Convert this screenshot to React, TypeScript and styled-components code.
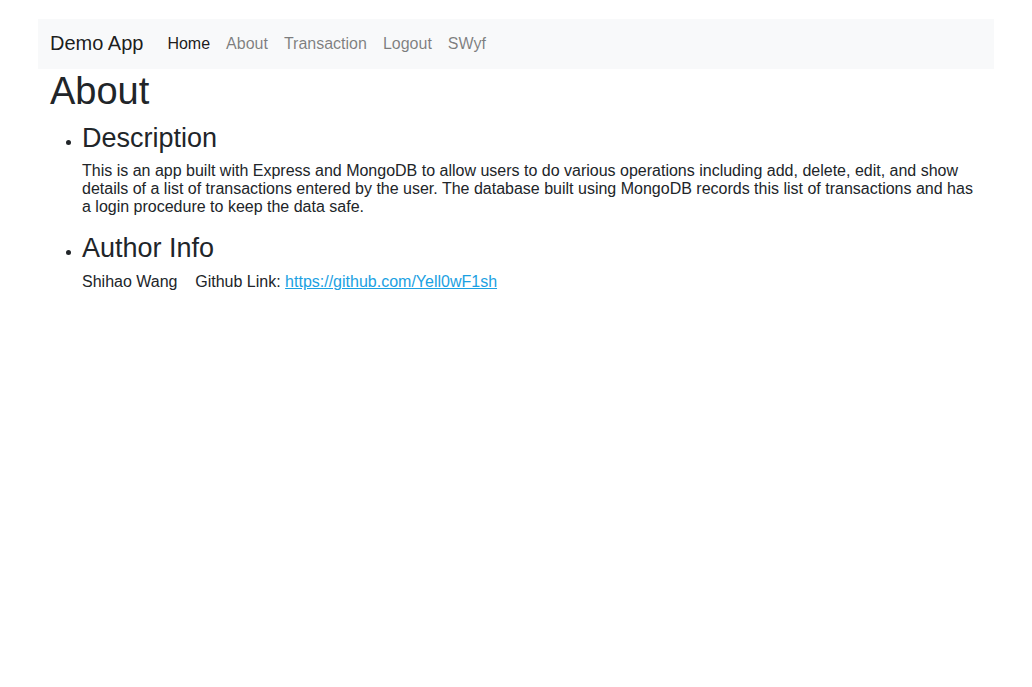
import React from "react";
import styled, { createGlobalStyle } from "styled-components";

const Global = createGlobalStyle`
  html, body { margin: 0; padding: 0; background: #fff; }
  body {
    font-family: "Liberation Sans", Arial, sans-serif;
    color: #212529;
    font-size: 16px;
  }
`;

const Page = styled.div`
  margin: 19px 38px 0 38px;
`;

const Navbar = styled.nav`
  display: flex;
  align-items: center;
  height: 50px;
  padding: 0 12px;
  background: #f8f9fa;
`;

const Brand = styled.a`
  font-size: 20px;
  color: rgba(0, 0, 0, 0.9);
  text-decoration: none;
  margin-right: 16px;
  padding-bottom: 1px;
`;

const NavList = styled.ul`
  display: flex;
  list-style: none;
  margin: 0;
  padding: 0;
`;

const NavLink = styled.a<{ $active?: boolean }>`
  display: block;
  padding: 0 8px;
  font-size: 16px;
  color: ${(p) => (p.$active ? "rgba(0,0,0,0.9)" : "rgba(0,0,0,0.5)")};
  text-decoration: none;
`;

const Content = styled.main`
  padding: 0 12px;
`;

const Title = styled.h1`
  font-size: 38px;
  font-weight: 400;
  line-height: 1.2;
  margin: 0 0 7px 0;
`;

const Sections = styled.ul`
  margin: 0;
  padding-left: 32px;
`;

const Section = styled.li`
  font-size: 16px;
`;

const SectionTitle = styled.h3<{ $gap?: number }>`
  font-size: 27px;
  font-weight: 400;
  line-height: 1.2;
  margin: 0 0 ${(p) => p.$gap ?? 8}px 0;
`;

const Body = styled.p`
  margin: 0 0 16px 0;
  line-height: 18px;
`;

const Link = styled.a`
  color: #1ba1e2;
  text-decoration: underline;
`;

export default function App() {
  const links = ["Home", "About", "Transaction", "Logout", "SWyf"];
  return (
    <>
      <Global />
      <Page>
        <Navbar>
          <Brand href="#">Demo App</Brand>
          <NavList>
            {links.map((l, i) => (
              <li key={l}>
                <NavLink href="#" $active={i === 0}>
                  {l}
                </NavLink>
              </li>
            ))}
          </NavList>
        </Navbar>
        <Content>
          <Title>About</Title>
          <Sections>
            <Section>
              <SectionTitle>Description</SectionTitle>
              <Body>
                This is an app built with Express and MongoDB to allow users to do various
                operations including add, delete, edit, and show details of a list of
                transactions entered by the user. The database built using MongoDB records
                this list of transactions and has a login procedure to keep the data safe.
              </Body>
            </Section>
            <Section>
              <SectionTitle $gap={9}>Author Info</SectionTitle>
              <Body>
                Shihao Wang&nbsp;&nbsp;&nbsp; Github Link:{" "}
                <Link href="#">https://github.com/Yell0wF1sh</Link>
              </Body>
            </Section>
          </Sections>
        </Content>
      </Page>
    </>
  );
}
